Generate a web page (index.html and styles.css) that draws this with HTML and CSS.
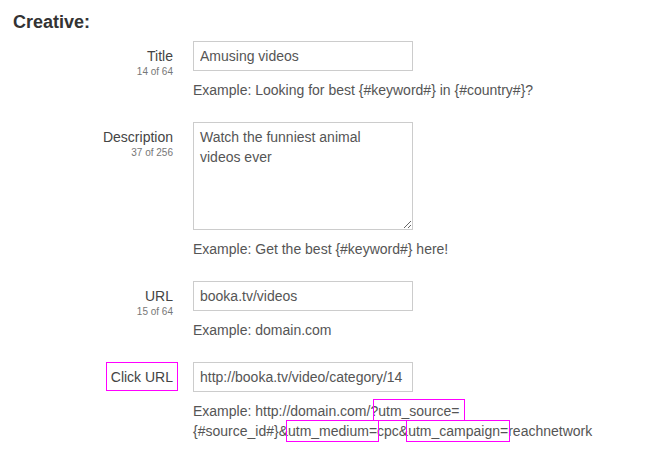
FILE: index.html
```html
<!DOCTYPE html>
<html>
<head>
<meta charset="utf-8">
<link rel="stylesheet" href="styles.css">
</head>
<body>
<div class="panel">
  <h2 class="heading">Creative:</h2>

  <div class="row">
    <div class="label-cell">
      <div class="label">Title</div>
      <div class="counter">14 of 64</div>
    </div>
    <div class="control-cell">
      <input class="field" type="text" value="Amusing videos">
      <div class="help">Example: Looking for best {#keyword#} in {#country#}?</div>
    </div>
  </div>

  <div class="row">
    <div class="label-cell">
      <div class="label">Description</div>
      <div class="counter">37 of 256</div>
    </div>
    <div class="control-cell">
      <textarea class="field area">Watch the funniest animal
videos ever</textarea>
      <div class="help">Example: Get the best {#keyword#} here!</div>
    </div>
  </div>

  <div class="row">
    <div class="label-cell">
      <div class="label">URL</div>
      <div class="counter">15 of 64</div>
    </div>
    <div class="control-cell">
      <input class="field" type="text" value="booka.tv/videos">
      <div class="help">Example: domain.com</div>
    </div>
  </div>

  <div class="row">
    <div class="label-cell">
      <div class="label"><span class="mark mark-label">Click URL</span></div>
    </div>
    <div class="control-cell">
      <input class="field" type="text" value="http://booka.tv/video/category/14">
      <div class="help">Example: http://domain.com/?<span class="mark mark-wide">utm_source=</span><br>{#source_id#}&amp;<span class="mark">utm_medium=</span>cpc&amp;<span class="mark">utm_campaign=</span>reachnetwork</div>
    </div>
  </div>
</div>
</body>
</html>
```

FILE: styles.css
```css
html, body {
  margin: 0;
  padding: 0;
  background: #ffffff;
}

body {
  font-family: "Liberation Sans", Arial, sans-serif;
  color: #555555;
}

.panel {
  padding: 11px 13px;
}

.heading {
  margin: 0 0 8px 0;
  font-size: 18px;
  line-height: 22px;
  font-weight: bold;
  color: #333333;
}

.row {
  display: grid;
  grid-template-columns: 160px 1fr;
  column-gap: 20px;
  margin-bottom: 22px;
}

.label-cell {
  text-align: right;
  padding-top: 5px;
}

.label {
  font-size: 14px;
  line-height: 20px;
  color: #444444;
}

.counter {
  font-size: 10px;
  line-height: 12px;
  color: #777777;
}

.control-cell {
  display: flex;
  flex-direction: column;
  align-items: flex-start;
}

.field {
  box-sizing: border-box;
  width: 220px;
  height: 30px;
  margin: 0;
  padding: 4px 6px;
  border: 1px solid #cccccc;
  border-radius: 0;
  background: #ffffff;
  font-family: "Liberation Sans", Arial, sans-serif;
  font-size: 14px;
  line-height: 20px;
  color: #555555;
  outline: none;
}

.area {
  height: 108px;
  resize: vertical;
  overflow: hidden;
  display: block;
}

.help {
  margin-top: 9px;
  font-size: 14px;
  line-height: 20px;
  color: #555555;
  white-space: nowrap;
}

.mark {
  outline: 1px solid #ff00ff;
  padding: 2px 1px;
  margin: 0 -1px;
}

.mark-wide {
  padding: 3px 4px 1px 4px;
  margin: 0 -4px;
}

.mark-label {
  padding: 6px 4px 5px 4px;
  margin: 0 -4px;
}
```
